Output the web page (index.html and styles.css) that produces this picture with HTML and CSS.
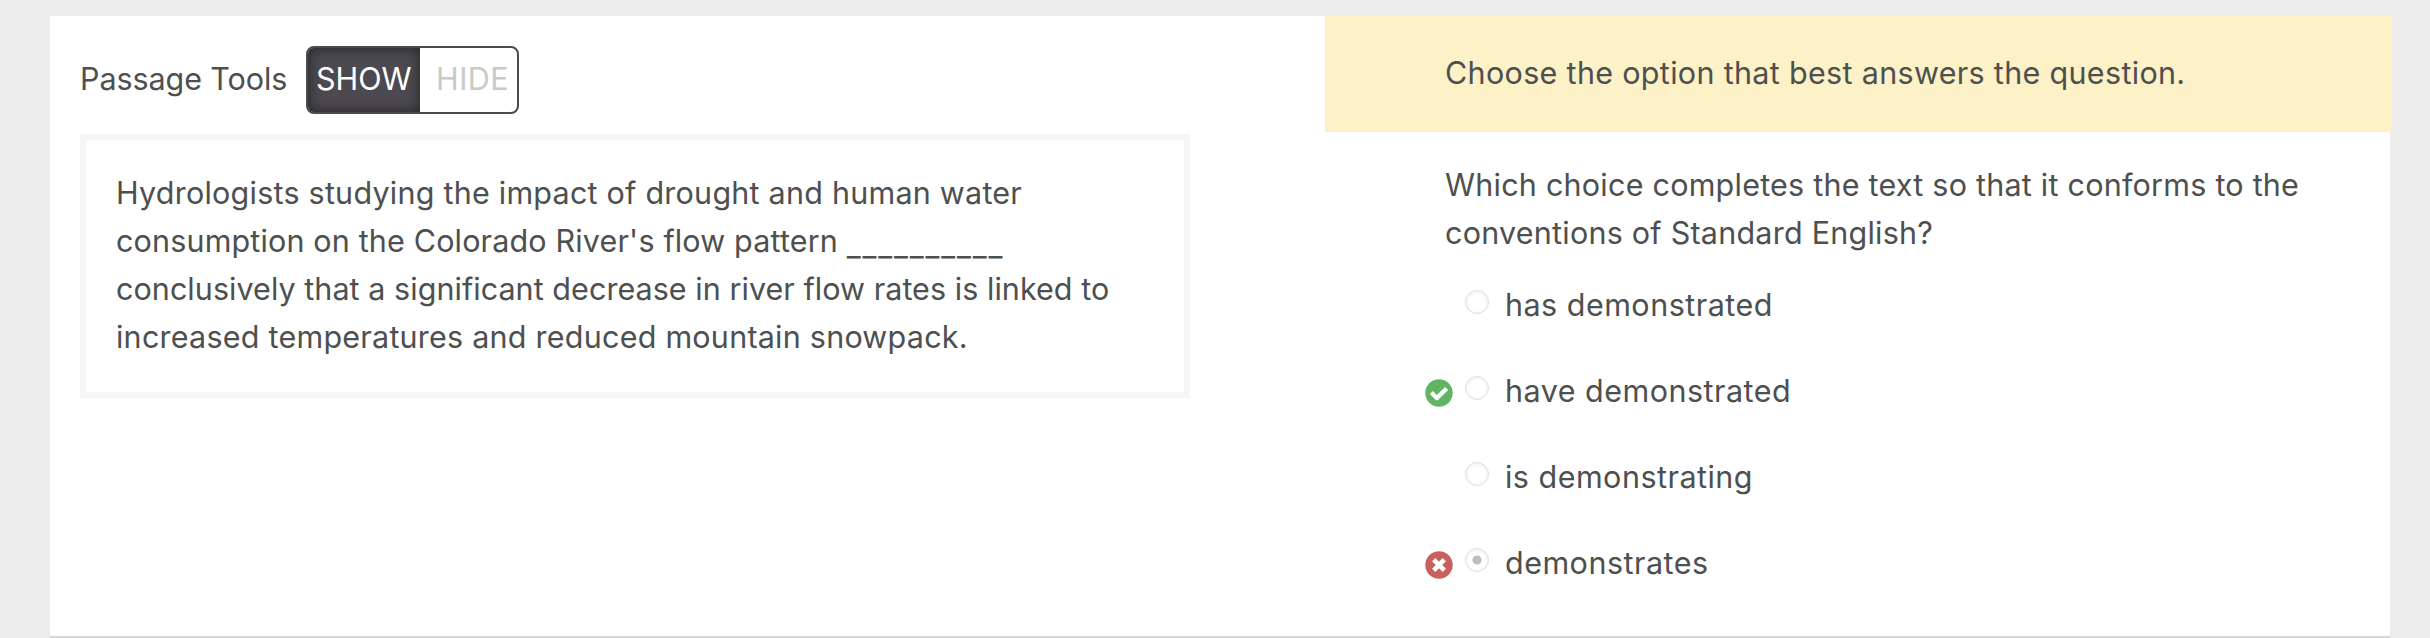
FILE: index.html
```html
<!DOCTYPE html>
<html lang="en">
<head>
<meta charset="utf-8">
<title>Practice Question</title>
<link rel="stylesheet" href="styles.css">
</head>
<body>
<main class="panel">
  <section class="passage-col">
    <div class="tools">
      <span class="tools-label">Passage Tools</span>
      <div class="toggle"><span class="toggle-on">SHOW</span><span class="toggle-off">HIDE</span></div>
    </div>
    <div class="passage">
      <div class="track-m">Hydrologists studying the impact of drought and human water</div>
      <div class="track-s">consumption on the Colorado River's flow pattern <span class="blank">__________</span></div>
      <div class="track-xs">conclusively that a significant decrease in river flow rates is linked to</div>
      <div class="track-m">increased temperatures and reduced mountain snowpack.</div>
    </div>
  </section>
  <section class="question-col">
    <div class="directions">Choose the option that best answers the question.</div>
    <div class="prompt track-m">
      <div>Which choice completes the text so that it conforms to the</div>
      <div>conventions of Standard English?</div>
    </div>
    <div class="options">
      <div class="option"><span class="mark"></span><span class="radio"></span><span class="answer">has demonstrated</span></div>
      <div class="option"><span class="mark"><svg viewBox="0 0 28 28"><circle cx="14" cy="14" r="13.7" fill="#60b565"/><path d="M6.3 13.6l5.5 5.5 9.8-9.6" fill="none" stroke="#fff" stroke-width="4.3" stroke-linejoin="round"/></svg></span><span class="radio"></span><span class="answer">have demonstrated</span></div>
      <div class="option"><span class="mark"></span><span class="radio"></span><span class="answer">is demonstrating</span></div>
      <div class="option"><span class="mark"><svg viewBox="0 0 28 28"><circle cx="14" cy="14" r="13.7" fill="#c96060"/><path d="M8.7 8.7l10.6 10.6M19.3 8.7L8.7 19.3" fill="none" stroke="#fff" stroke-width="4.6"/></svg></span><span class="radio radio-checked"></span><span class="answer">demonstrates</span></div>
    </div>
  </section>
</main>
</body>
</html>
```
FILE: styles.css
```css
* { box-sizing: border-box; }
body {
  margin: 0;
  height: 638px;
  padding: 16px 40px 0 50px;
  background: #ededed;
  color: #4d504f;
  font: 30.5px/48px Inter, sans-serif;
  font-feature-settings: "liga" 1;
  overflow: hidden;
}
.panel {
  display: flex;
  width: 2340px;
  height: 622px;
  background: #fff;
  border-bottom: 2px solid #d8d8d8;
}
.passage-col { flex: none; width: 1275px; padding: 30px 0 0 30px; }
.tools { display: flex; height: 68px; }
.tools-label { width: 226px; padding-top: 9px; letter-spacing: -0.08px; white-space: nowrap; }
.toggle {
  display: flex;
  width: 213px;
  height: 68px;
  border: 2px solid #4c4a50;
  border-radius: 8px;
  line-height: 62px;
  overflow: hidden;
}
.toggle-on {
  width: 112px;
  padding-left: 8px;
  background: #4c4a50;
  box-shadow: inset 0 0 14px #222;
  color: #fff;
}
.toggle-off { padding-left: 16px; color: #c9c9c9; letter-spacing: 0.5px; }
.passage {
  width: 1110px;
  height: 264px;
  margin-top: 20px;
  padding: 29px 30px 0;
  border: 6px solid #f6f6f9;
  white-space: nowrap;
}
.track-xs { letter-spacing: 0.05px; }
.track-s { letter-spacing: 0.155px; }
.track-m { letter-spacing: 0.235px; }
.blank { letter-spacing: 1.85px; line-height: 1; vertical-align: -4px; }
.question-col { flex: none; width: 1067px; }
.directions {
  height: 116px;
  padding: 33px 0 0 120px;
  background: #fdf1c7;
  letter-spacing: 0.32px;
}
.prompt { padding: 29px 0 0 120px; white-space: nowrap; }
.options { padding: 24px 0 0 100px; letter-spacing: 0.48px; }
.option { display: flex; height: 86px; }
.mark { width: 28px; height: 28px; margin-top: 12px; }
.mark svg { display: block; width: 28px; height: 28px; }
.radio {
  width: 24px;
  height: 24px;
  margin: 9px 16px 0 12px;
  border: 1px solid #dedede;
  border-radius: 50%;
  box-shadow: inset 0 1px 4px #ececec;
}
.radio-checked { background: radial-gradient(circle, #bdbdbd 4.2px, transparent 4.9px); }
.answer { white-space: nowrap; }
```
